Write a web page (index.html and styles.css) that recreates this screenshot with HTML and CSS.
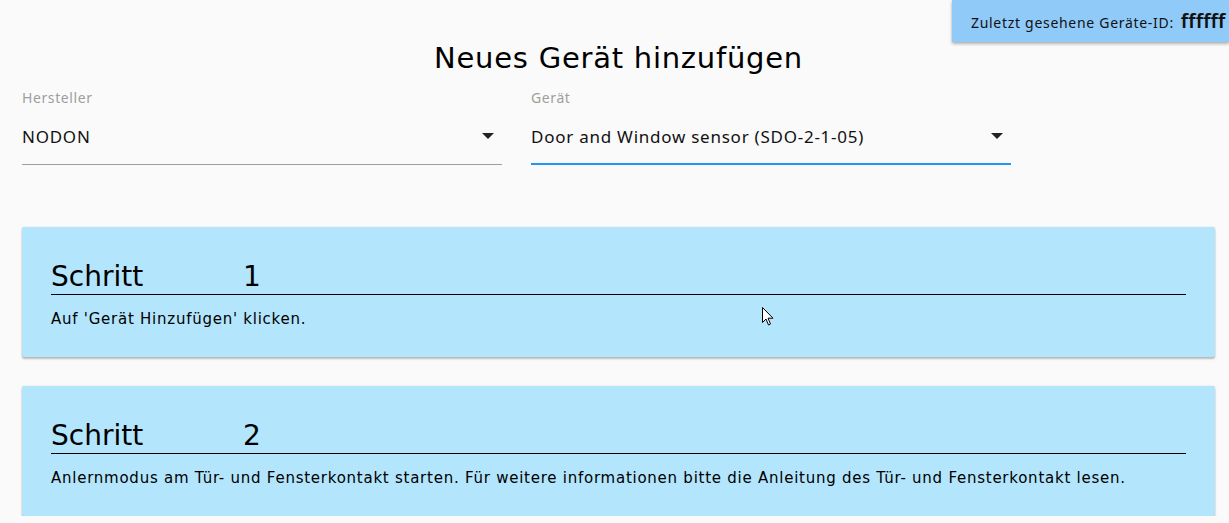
FILE: index.html
```html
<!DOCTYPE html>
<html lang="de">
<head>
<meta charset="utf-8">
<title>Neues Gerät hinzufügen</title>
<link rel="stylesheet" href="styles.css">
</head>
<body>
<div class="badge"><span class="badge-label">Zuletzt gesehene Geräte-ID:</span><span class="badge-id">ffffff</span></div>
<main class="page">
  <h1 class="title">Neues Gerät hinzufügen</h1>
  <div class="selects">
    <div class="field">
      <label class="field-label">Hersteller</label>
      <div class="field-value">
        <span>NODON</span>
        <span class="arrow"></span>
      </div>
    </div>
    <div class="field field-focused">
      <label class="field-label">Gerät</label>
      <div class="field-value">
        <span>Door and Window sensor (SDO-2-1-05)</span>
        <span class="arrow"></span>
      </div>
    </div>
  </div>
  <section class="card">
    <h2 class="step-title"><span class="step-word">Schritt</span>1</h2>
    <p class="step-text">Auf 'Gerät Hinzufügen' klicken.</p>
    <svg class="cursor" width="12" height="20" viewBox="0 0 12 20"><path d="M0.5 0.5 L0.5 15.5 L4 12 L6.5 18 L8.5 17 L6 11.2 L11 11.2 Z" fill="#fff" stroke="#000" stroke-width="1"/></svg>
  </section>
  <section class="card">
    <h2 class="step-title"><span class="step-word">Schritt</span>2</h2>
    <p class="step-text">Anlernmodus am Tür- und Fensterkontakt starten. Für weitere informationen bitte die Anleitung des Tür- und Fensterkontakt lesen.</p>
  </section>
</main>
</body>
</html>
```

FILE: styles.css
```css
html, body {
  margin: 0;
  padding: 0;
  background: #fafafa;
}

body {
  font-family: "DejaVu Sans", sans-serif;
  color: #000;
  position: relative;
  overflow: hidden;
}

.badge {
  position: absolute;
  top: 0;
  right: 0;
  width: 258px;
  height: 42px;
  padding-left: 19px;
  background: #90caf9;
  box-shadow: 0 2px 3px rgba(0, 0, 0, 0.28), 0 0 2px rgba(0, 0, 0, 0.1);
  display: flex;
  align-items: baseline;
  font-family: "Noto Sans", sans-serif;
  white-space: nowrap;
  overflow: hidden;
  box-sizing: content-box;
}

.badge-label {
  font-size: 14px;
  line-height: 46px;
  letter-spacing: 0.7px;
  color: #111;
  margin-right: 7px;
}

.badge-id {
  font-size: 20px;
  font-weight: 600;
  color: #111;
}

.page {
  padding: 0 14px 0 22px;
}

.title {
  margin: 0;
  padding-top: 41px;
  font-size: 29px;
  line-height: 34px;
  font-weight: normal;
  text-align: center;
  letter-spacing: 0.75px;
}

.selects {
  display: grid;
  grid-template-columns: 480px 480px;
  column-gap: 29px;
  margin-top: 13px;
  font-family: "Noto Sans", sans-serif;
}

.field {
  display: flex;
  flex-direction: column;
}

.field-label {
  font-size: 14px;
  line-height: 20px;
  letter-spacing: 0.6px;
  color: #9e9e9e;
}

.field-value {
  display: flex;
  align-items: center;
  justify-content: space-between;
  padding: 17px 8px 15px 0;
  font-size: 17px;
  line-height: 24px;
  letter-spacing: 0.75px;
  color: #111;
  border-bottom: 1px solid #9e9e9e;
}

.field-focused .field-value {
  border-bottom: 2px solid #2196f3;
  padding-bottom: 14px;
}

.arrow {
  width: 0;
  height: 0;
  border-left: 6px solid transparent;
  border-right: 6px solid transparent;
  border-top: 6px solid #222;
  margin-top: -3px;
}

.card {
  position: relative;
  margin-top: 62px;
  padding: 33px 29px 28px;
  background: #b3e5fc;
  border-radius: 2px;
  box-shadow: 0 2px 2px rgba(0, 0, 0, 0.24), 0 0 2px rgba(0, 0, 0, 0.12);
}

.card + .card {
  margin-top: 29px;
}

.step-title {
  margin: 0;
  font-size: 28px;
  line-height: 34px;
  font-weight: normal;
  padding-bottom: 0;
  border-bottom: 1px solid #000;
}

.step-word {
  display: inline-block;
  width: 192px;
}

.step-text {
  margin: 14px 0 0;
  font-size: 15px;
  line-height: 20px;
  letter-spacing: 0.75px;
}

.cursor {
  position: absolute;
  left: 740px;
  top: 80px;
}
```
